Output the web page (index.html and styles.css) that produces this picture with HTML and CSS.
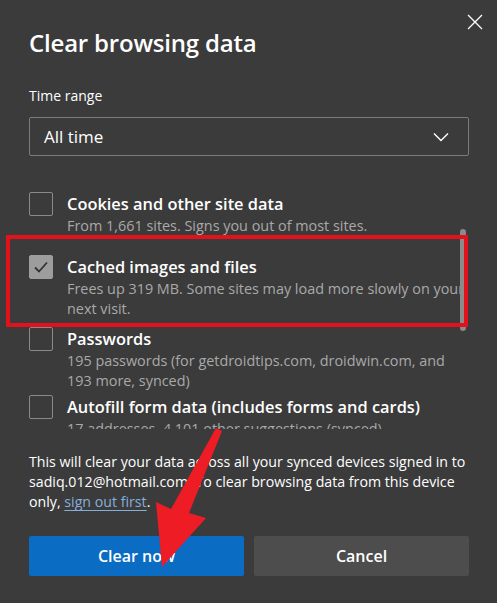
FILE: index.html
```html
<!DOCTYPE html>
<html lang="en">
<head>
<meta charset="utf-8">
<title>Clear browsing data</title>
<link rel="stylesheet" href="styles.css">
</head>
<body>
<div class="dialog">
  <button class="close" aria-label="Close">
    <svg width="16" height="16" viewBox="0 0 16 16"><path d="M1 1 L15 15 M15 1 L1 15" stroke="#ffffff" stroke-width="1.3" fill="none"/></svg>
  </button>
  <h1 class="title">Clear browsing data</h1>
  <div class="field-label">Time range</div>
  <div class="select">
    <span>All time</span>
    <svg class="chev" width="16" height="10" viewBox="0 0 16 10"><path d="M1 1.5 L8 8.5 L15 1.5" stroke="#ffffff" stroke-width="1.4" fill="none"/></svg>
  </div>
  <div class="list">
    <div class="row row-cookies">
      <span class="box"></span>
      <div class="text">
        <div class="label">Cookies and other site data</div>
        <div class="sub">From 1,661 sites. Signs you out of most sites.</div>
      </div>
    </div>
    <div class="row row-cached">
      <span class="box checked">
        <svg width="16" height="14" viewBox="0 0 16 14"><path d="M2 7.5 L6 11.5 L14 2.5" stroke="#333333" stroke-width="1.8" fill="none"/></svg>
      </span>
      <div class="text">
        <div class="label">Cached images and files</div>
        <div class="sub">Frees up 319 MB. Some sites may load more slowly on your next visit.</div>
      </div>
    </div>
    <div class="row row-passwords">
      <span class="box"></span>
      <div class="text">
        <div class="label">Passwords</div>
        <div class="sub">195 passwords (for getdroidtips.com, droidwin.com, and<br>193 more, synced)</div>
      </div>
    </div>
    <div class="row">
      <span class="box"></span>
      <div class="text">
        <div class="label">Autofill form data (includes forms and cards)</div>
        <div class="sub">17 addresses, 4,101 other suggestions (synced)</div>
      </div>
    </div>
    <div class="scrollbar"></div>
  </div>
  <p class="note">This will clear your data across all your synced devices signed in to sadiq.012@hotmail.com. To clear browsing data from this device only, <a href="#">sign out first</a>.</p>
  <div class="buttons">
    <button class="btn primary">Clear now</button>
    <button class="btn secondary">Cancel</button>
  </div>
  <div class="highlight"></div>
  <svg class="arrow" width="497" height="603" viewBox="0 0 497 603">
    <polygon points="216,428 222,431 189,513 206,518 162,567 156,502 171,509" fill="#ee1c24"/>
  </svg>
</div>
</body>
</html>
```

FILE: styles.css
```css
* { box-sizing: border-box; }
html, body { margin: 0; padding: 0; }
body {
  background: #3b3b3b;
  font-family: "Open Sans", "Noto Sans", sans-serif;
  color: #ffffff;
}
.dialog {
  position: relative;
  width: 497px;
  height: 603px;
  padding: 27px 28px 0 29px;
  background: #3b3b3b;
  overflow: hidden;
}
.close {
  position: absolute;
  top: 13px;
  left: 466px;
  width: 18px;
  height: 18px;
  padding: 0;
  border: 0;
  background: none;
  display: flex;
  align-items: center;
  justify-content: center;
}
.title {
  margin: 0;
  font-size: 24px;
  line-height: 32px;
  font-weight: 600;
  letter-spacing: -0.2px;
}
.field-label {
  margin-top: 27px;
  font-size: 14px;
  line-height: 20px;
  color: #ffffff;
}
.select {
  margin-top: 11px;
  height: 39px;
  border: 1px solid #7c7c7c;
  border-radius: 2px;
  display: flex;
  align-items: center;
  justify-content: space-between;
  padding: 0 19px 0 14px;
  font-size: 17px;
}
.list {
  position: relative;
  margin-top: 36px;
  height: 237px;
  overflow: hidden;
  margin-right: -8px;
}
.row {
  display: flex;
  gap: 14px;
}
.row-cookies { margin-bottom: 19px; }
.row-cached { margin-bottom: 8px; }
.row-passwords { margin-bottom: 4px; }
.box {
  flex: 0 0 24px;
  width: 24px;
  height: 24px;
  border: 1px solid #8a8a8a;
  border-radius: 2px;
  display: flex;
  align-items: center;
  justify-content: center;
}
.box.checked {
  background: #9d9d9d;
  border-color: #9d9d9d;
}
.text { flex: 1; padding-right: 4px; }
.label {
  font-size: 16.4px;
  line-height: 24px;
  font-weight: 600;
}
.sub {
  font-size: 14.4px;
  line-height: 20px;
  color: #a9a9a9;
}
.scrollbar {
  position: absolute;
  left: 431px;
  top: 37px;
  width: 6px;
  height: 102px;
  border-radius: 3px;
  background: #8b8b8b;
}
.note {
  margin: 23px 0 0;
  font-size: 14.2px;
  line-height: 20px;
  color: #ffffff;
}
.note a {
  color: #86aedc;
  text-decoration: underline;
  text-underline-offset: 3px;
}
.buttons {
  margin-top: 24px;
  display: grid;
  grid-template-columns: 1fr 1fr;
  gap: 10px;
}
.btn {
  height: 40px;
  border: 0;
  border-radius: 2px;
  font-family: inherit;
  font-size: 16px;
  font-weight: 600;
  color: #ffffff;
}
.primary { background: #0b6cc4; }
.secondary { background: #4d4d4d; }
.highlight {
  position: absolute;
  left: 6px;
  top: 235px;
  width: 462px;
  height: 92px;
  border: 4px solid #e3111b;
}
.arrow {
  position: absolute;
  left: 0;
  top: 0;
  pointer-events: none;
}
```
